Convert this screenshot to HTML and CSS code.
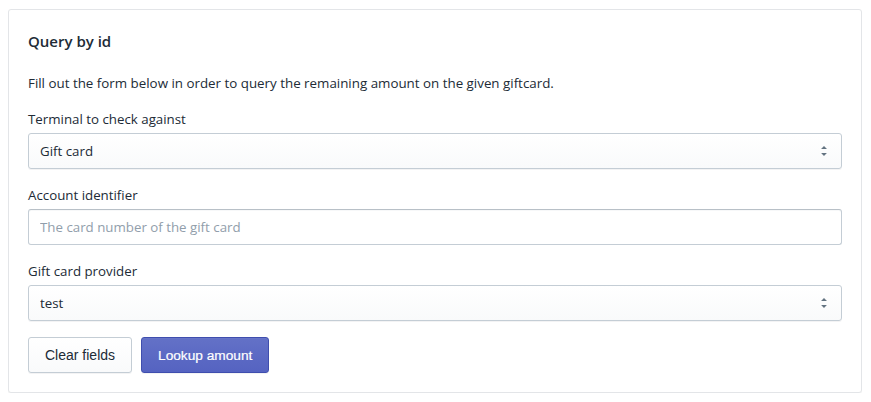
FILE: index.html
```html
<!DOCTYPE html>
<html>
<head>
<meta charset="utf-8">
<link rel="stylesheet" href="styles.css">
</head>
<body>
<div class="card">
  <h2 class="card-title">Query by id</h2>
  <div class="card-section">
    <p class="desc">Fill out the form below in order to query the remaining amount on the given giftcard.</p>
    <div class="field">
      <label class="label">Terminal to check against</label>
      <div class="select">
        <select><option>Gift card</option></select>
        <svg class="select-icon" viewBox="0 0 20 20" width="20" height="20"><path d="M13 8l-3-3-3 3h6zm-.1 4L10 15l-2.9-3h5.8z"/></svg>
      </div>
    </div>
    <div class="field">
      <label class="label">Account identifier</label>
      <input class="input" type="text" placeholder="The card number of the gift card">
    </div>
    <div class="field">
      <label class="label">Gift card provider</label>
      <div class="select">
        <select><option>test</option></select>
        <svg class="select-icon" viewBox="0 0 20 20" width="20" height="20"><path d="M13 8l-3-3-3 3h6zm-.1 4L10 15l-2.9-3h5.8z"/></svg>
      </div>
    </div>
    <div class="actions">
      <button class="btn">Clear fields</button>
      <button class="btn btn-primary">Lookup amount</button>
    </div>
  </div>
</div>
</body>
</html>
```
FILE: styles.css
```css
html, body {
  background: #ffffff;
}
body {
  margin: 9px 9px 0 8px;
  font-family: "Open Sans", "Noto Sans", sans-serif;
  font-size: 14px;
  line-height: 20px;
  color: #212b36;
}
.card {
  box-sizing: border-box;
  width: 854px;
  background: #fff;
  border: 1px solid #e3e5e8;
  border-radius: 3px;
  box-shadow: 0 1px 2px 0 rgba(63,63,68,0.08);
}
.card-title {
  margin: 0;
  padding: 19px 19px 0;
  font-size: 15px;
  line-height: 24px;
  font-weight: 600;
}
.card-section {
  padding: 20px 19px 19px;
  display: flex;
  flex-direction: column;
  gap: 16px;
}
.desc {
  margin: 0;
  font-size: 13.35px;
}
.field {
  display: flex;
  flex-direction: column;
  gap: 4px;
}
.label {
  font-size: 13.3px;
}
.select {
  position: relative;
}
.select select {
  appearance: none;
  -webkit-appearance: none;
  width: 100%;
  height: 36px;
  margin: 0;
  padding: 0 32px 0 11px;
  border: 1px solid #c4cdd5;
  border-radius: 3px;
  background: linear-gradient(180deg, #fff, #f9fafb);
  box-shadow: 0 1px 0 0 rgba(22,29,37,0.05);
  font-family: inherit;
  font-size: 13.3px;
  color: #212b36;
  outline: none;
}
.select-icon {
  position: absolute;
  right: 8px;
  top: 8px;
  fill: #637381;
  pointer-events: none;
}
.input {
  width: 100%;
  box-sizing: border-box;
  height: 36px;
  margin: 0;
  padding: 0 11px;
  border: 1px solid #c4cdd5;
  border-top-color: #b8c0c7;
  border-radius: 3px;
  background: #fff;
  box-shadow: inset 0 1px 0 0 rgba(99,115,129,0.05);
  font-family: inherit;
  font-size: 13.3px;
  color: #212b36;
  outline: none;
}
.input::placeholder {
  color: #919eab;
}
.actions {
  display: flex;
  gap: 9px;
}
.btn {
  height: 36px;
  padding: 0 16px;
  border: 1px solid #c4cdd5;
  border-radius: 3px;
  background: linear-gradient(180deg, #fff, #f9fafb);
  box-shadow: 0 1px 0 0 rgba(22,29,37,0.05);
  font-family: "Liberation Sans", Arial, sans-serif;
  font-size: 14px;
  color: #212b36;
  cursor: pointer;
}
.btn-primary {
  background: linear-gradient(180deg, #6371c7, #5563c1);
  border-color: #3f4eae;
  box-shadow: inset 0 1px 0 0 #6774c8, 0 1px 0 0 rgba(22,29,37,0.05);
  color: #fff;
  font-size: 13.7px;
  -webkit-text-stroke: 0.2px #fff;
}
```
